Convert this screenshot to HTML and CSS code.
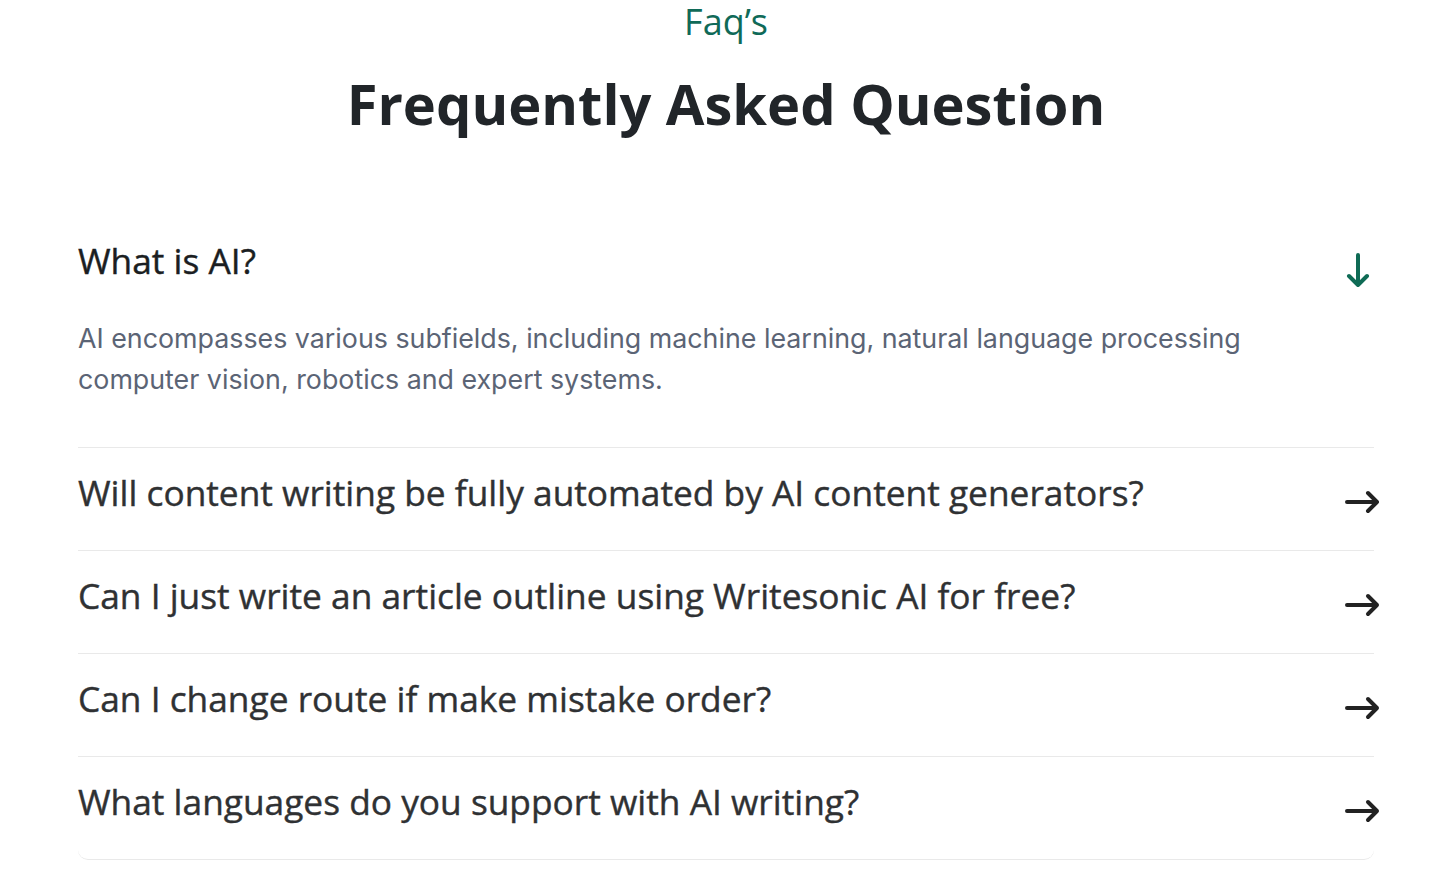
FILE: index.html
```html
<!DOCTYPE html>
<html lang="en">
<head>
  <meta charset="UTF-8">
  <meta name="viewport" content="width=device-width, initial-scale=1.0">
  <title>Faq's</title>
  <link rel="stylesheet" href="styles.css">
</head>
<body>
  <section class="faq">
    <p class="faq-tag">Faq’s</p>
    <h1 class="faq-title">Frequently Asked Question</h1>

    <div class="faq-list">
      <div class="faq-item open">
        <div class="faq-head">
          <h3 class="faq-question">What is AI?</h3>
          <svg class="icon-down" width="28" height="40" viewBox="0 0 28 40" fill="none" stroke="currentColor" stroke-width="4" stroke-linecap="round" stroke-linejoin="round">
            <path d="M14 4V34M5 25L14 34L23 25"/>
          </svg>
        </div>
        <p class="faq-answer">AI encompasses various subfields, including machine learning, natural language processing computer vision, robotics and expert systems.</p>
      </div>

      <div class="faq-item">
        <div class="faq-head">
          <h3 class="faq-question">Will content writing be fully automated by AI content generators?</h3>
          <svg class="icon-right" width="40" height="24" viewBox="0 0 40 24" fill="none" stroke="currentColor" stroke-width="4" stroke-linecap="round" stroke-linejoin="round">
            <path d="M4 12H34M25 3L34 12L25 21"/>
          </svg>
        </div>
      </div>

      <div class="faq-item">
        <div class="faq-head">
          <h3 class="faq-question">Can I just write an article outline using Writesonic AI for free?</h3>
          <svg class="icon-right" width="40" height="24" viewBox="0 0 40 24" fill="none" stroke="currentColor" stroke-width="4" stroke-linecap="round" stroke-linejoin="round">
            <path d="M4 12H34M25 3L34 12L25 21"/>
          </svg>
        </div>
      </div>

      <div class="faq-item">
        <div class="faq-head">
          <h3 class="faq-question">Can I change route if make mistake order?</h3>
          <svg class="icon-right" width="40" height="24" viewBox="0 0 40 24" fill="none" stroke="currentColor" stroke-width="4" stroke-linecap="round" stroke-linejoin="round">
            <path d="M4 12H34M25 3L34 12L25 21"/>
          </svg>
        </div>
      </div>

      <div class="faq-item">
        <div class="faq-head">
          <h3 class="faq-question">What languages do you support with AI writing?</h3>
          <svg class="icon-right" width="40" height="24" viewBox="0 0 40 24" fill="none" stroke="currentColor" stroke-width="4" stroke-linecap="round" stroke-linejoin="round">
            <path d="M4 12H34M25 3L34 12L25 21"/>
          </svg>
        </div>
      </div>
    </div>
  </section>
</body>
</html>
```

FILE: styles.css
```css
* {
  margin: 0;
  padding: 0;
  box-sizing: border-box;
}
body {
  font-family: 'Open Sans', sans-serif;
  background: #fff;
  color: #333;
}
.faq {
  max-width: 1296px;
  margin: 0 auto;
  text-align: center;
}
.faq-tag {
  font-size: 36px;
  line-height: 44px;
  color: #106a58;
}
.faq-title {
  font-size: 56px;
  font-weight: 700;
  line-height: 1.2;
  color: #212529;
  margin-top: 26px;
  margin-bottom: 79px;
}
.faq-list {
  text-align: left;
}
.faq-item {
  border-bottom: 1px solid #e9e9e9;
  padding: 19px 0 33px;
}
.faq-item:last-child {
  border-radius: 0 0 10px 10px;
}
.faq-item.open {
  padding: 19px 0 47px;
}
.faq-head {
  display: flex;
  justify-content: space-between;
  align-items: flex-start;
}
.faq-question {
  font-size: 35.3px;
  font-weight: 400;
  line-height: 50px;
  color: #2f3133;
  -webkit-text-stroke: 0.4px currentColor;
}
.open .faq-question {
  color: #1b1e22;
}
.icon-right {
  flex-shrink: 0;
  color: #222;
  margin-top: 23px;
  margin-right: -9px;
}
.icon-down {
  flex-shrink: 0;
  color: #0f6b55;
  margin-top: 16px;
  margin-right: 2px;
}
.faq-answer {
  font-family: 'Inter', sans-serif;
  font-size: 26.8px;
  line-height: 41px;
  color: #5b6475;
  margin-top: 27px;
  max-width: 1200px;
}
```
